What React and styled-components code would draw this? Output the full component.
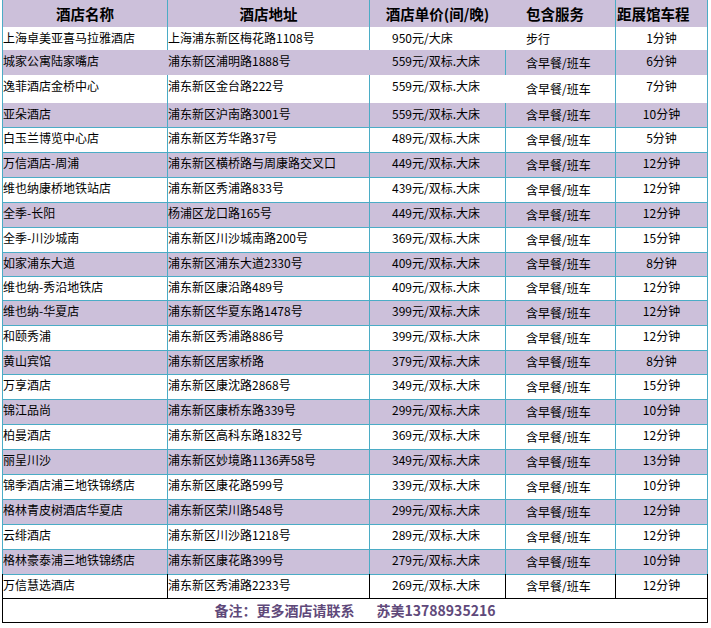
import React from 'react';
import styled, { createGlobalStyle } from 'styled-components';

const TEAL = '#4bacc6';
const INK = '#000';

const GlobalStyle = createGlobalStyle`
  body {
    margin: 0;
    background: #fff;
    font-family: "Noto Sans CJK SC", "Noto Sans", sans-serif;
    color: #000;
  }
`;

const Sheet = styled.div`
  margin-left: 2px;
  width: 706px;
  display: flex;
  flex-direction: column;
`;

const Row = styled.div`
  display: grid;
  grid-template-columns: 165px 202px 136px 110px 92px;
  box-sizing: border-box;
  height: ${p => p.$h}px;
  background: ${p => (p.$shade ? '#ccc0da' : '#fff')};
  border-right: 1px solid ${p => p.$edge};
  box-shadow: ${p => (p.$top ? `inset 0 1px 0 ${p.$top}` : 'none')};
`;

const Cell = styled.div`
  box-sizing: border-box;
  border-left: 1px solid ${p => p.$line || 'transparent'};
  display: flex;
  align-items: ${p => (p.$middle ? 'center' : 'flex-start')};
  justify-content: ${p => (p.$center ? 'center' : 'flex-start')};
  padding: ${p => (p.$middle ? '0' : '3px')} 0 0 ${p => p.$indent || 0}px;
  font-size: 12px;
  line-height: 16px;
  white-space: nowrap;
`;

const HeadCell = styled(Cell)`
  align-items: center;
  padding-top: 0;
  font-size: 14.5px;
  font-weight: 700;
  line-height: 18px;
`;

const Footer = styled.div`
  box-sizing: border-box;
  height: 25px;
  border: 1px solid ${INK};
  display: flex;
  align-items: center;
  justify-content: center;
  padding-bottom: 2px;
  color: #5f497a;
  font-size: 14px;
  font-weight: 700;
`;

const Contact = styled.span`
  margin-left: 22px;
`;

const hotels = [
  ['上海卓美亚喜马拉雅酒店', '上海浦东新区梅花路1108号', '950元/大床', '步行', 1],
  ['城家公寓陆家嘴店', '浦东新区浦明路1888号', 559, '含早餐/班车', 6],
  ['逸菲酒店金桥中心', '浦东新区金台路222号', 559, '含早餐/班车', 7],
  ['亚朵酒店', '浦东新区沪南路3001号', 559, '含早餐/班车', 10],
  ['白玉兰博览中心店', '浦东新区芳华路37号', 489, '含早餐/班车', 5],
  ['万信酒店-周浦', '浦东新区横桥路与周康路交叉口', 449, '含早餐/班车', 12],
  ['维也纳康桥地铁站店', '浦东新区秀浦路833号', 439, '含早餐/班车', 12],
  ['全季-长阳', '杨浦区龙口路165号', 449, '含早餐/班车', 12],
  ['全季-川沙城南', '浦东新区川沙城南路200号', 369, '含早餐/班车', 15],
  ['如家浦东大道', '浦东新区浦东大道2330号', 409, '含早餐/班车', 8],
  ['维也纳-秀沿地铁店', '浦东新区康沿路489号', 409, '含早餐/班车', 12],
  ['维也纳-华夏店', '浦东新区华夏东路1478号', 399, '含早餐/班车', 12],
  ['和颐秀浦', '浦东新区秀浦路886号', 399, '含早餐/班车', 12],
  ['黄山宾馆', '浦东新区居家桥路', 379, '含早餐/班车', 8],
  ['万享酒店', '浦东新区康沈路2868号', 349, '含早餐/班车', 15],
  ['锦江品尚', '浦东新区康桥东路339号', 299, '含早餐/班车', 10],
  ['柏曼酒店', '浦东新区高科东路1832号', 369, '含早餐/班车', 12],
  ['丽呈川沙', '浦东新区妙境路1136弄58号', 349, '含早餐/班车', 13],
  ['锦季酒店浦三地铁锦绣店', '浦东新区康花路599号', 339, '含早餐/班车', 10],
  ['格林青皮树酒店华夏店', '浦东新区荣川路548号', 299, '含早餐/班车', 12],
  ['云绯酒店', '浦东新区川沙路1218号', 289, '含早餐/班车', 12],
  ['格林豪泰浦三地铁锦绣店', '浦东新区康花路399号', 279, '含早餐/班车', 10],
  ['万信慧选酒店', '浦东新区秀浦路2233号', 269, '含早餐/班车', 12],
];

const heights = [23, 25, 28, 24, 25, 25, 25, 25, 25, 24, 24, 25, 25, 24, 25, 25, 25, 25, 25, 25, 25, 25, 24];

// which vertical rules show in each row (left edge + column starts)
function rulesFor(i) {
  if (i === 0 || i === 2) return [1, 1, 1, 0, 1];
  if (i === 1) return [1, 0, 0, 1, 1];
  return [1, 1, 1, 1, 1];
}

export default function App() {
  const last = hotels.length - 1;
  return (
    <>
      <GlobalStyle />
      <Sheet>
        <Row $h={27} $shade $edge={TEAL}>
          <HeadCell $line={TEAL} $center>酒店名称</HeadCell>
          <HeadCell $line={TEAL} $center>酒店地址</HeadCell>
          <HeadCell $line={TEAL} $center>酒店单价(间/晚)</HeadCell>
          <HeadCell $indent={20}>包含服务</HeadCell>
          <HeadCell $line={TEAL} $indent={1}>距展馆车程</HeadCell>
        </Row>

        {hotels.map(([name, addr, price, service, mins], i) => {
          const color = i === last ? INK : TEAL;
          const rules = rulesFor(i).map(on => (on ? color : null));
          return (
            <Row
              key={name}
              $h={heights[i]}
              $shade={i % 2 === 1}
              $edge={color}
              $top={i >= 4 ? TEAL : null}
            >
              <Cell $line={rules[0]}>{name}</Cell>
              <Cell $line={rules[1]}>{addr}</Cell>
              <Cell $line={rules[2]} $indent={22}>
                {typeof price === 'number' ? `${price}元/双标.大床` : price}
              </Cell>
              <Cell $line={rules[3]} $indent={20} $middle>{service}</Cell>
              <Cell $line={rules[4]} $center>{mins}分钟</Cell>
            </Row>
          );
        })}

        <Footer>
          备注：更多酒店请联系<Contact>苏美13788935216</Contact>
        </Footer>
      </Sheet>
    </>
  );
}
